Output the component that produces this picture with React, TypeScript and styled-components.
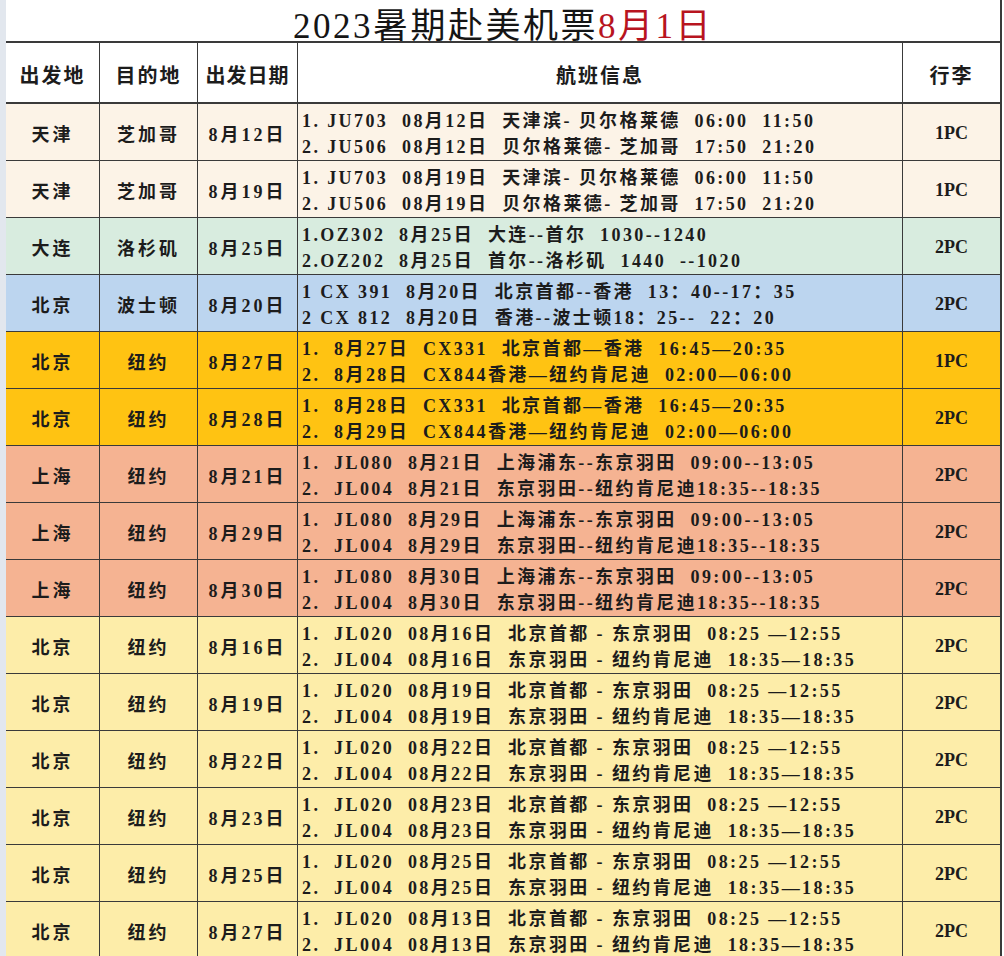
import styled, { createGlobalStyle } from 'styled-components'

type Tone = 'cream' | 'green' | 'blue' | 'gold' | 'salmon' | 'yellow'

type Flight = {
	from: string
	to: string
	date: string
	lines: [string, string]
	bag: string
	tone: Tone
}

const tones: Record<Tone, string> = {
	cream: '#fcf3e7',
	green: '#d8ecdf',
	blue: '#bcd5ef',
	gold: '#ffc312',
	salmon: '#f5b392',
	yellow: '#fdeda9',
}

const jl = (d: string): [string, string] => [
	`1.  JL020  08月${d}日  北京首都 - 东京羽田  08:25 —12:55`,
	`2.  JL004  08月${d}日  东京羽田 - 纽约肯尼迪  18:35—18:35`,
]

const sh = (d: string): [string, string] => [
	`1.  JL080  8月${d}日  上海浦东--东京羽田  09:00--13:05`,
	`2.  JL004  8月${d}日  东京羽田--纽约肯尼迪18:35--18:35`,
]

const cx = (a: string, b: string): [string, string] => [
	`1.  8月${a}日  CX331  北京首都—香港  16:45—20:35`,
	`2.  8月${b}日  CX844香港—纽约肯尼迪  02:00—06:00`,
]

const flights: Flight[] = [
	{
		from: '天津', to: '芝加哥', date: '8月12日', bag: '1PC', tone: 'cream',
		lines: ['1. JU703  08月12日  天津滨- 贝尔格莱德  06:00  11:50', '2. JU506  08月12日  贝尔格莱德- 芝加哥  17:50  21:20'],
	},
	{
		from: '天津', to: '芝加哥', date: '8月19日', bag: '1PC', tone: 'cream',
		lines: ['1. JU703  08月19日  天津滨- 贝尔格莱德  06:00  11:50', '2. JU506  08月19日  贝尔格莱德- 芝加哥  17:50  21:20'],
	},
	{
		from: '大连', to: '洛杉矶', date: '8月25日', bag: '2PC', tone: 'green',
		lines: ['1.OZ302  8月25日  大连--首尔  1030--1240', '2.OZ202  8月25日  首尔--洛杉矶  1440  --1020'],
	},
	{
		from: '北京', to: '波士顿', date: '8月20日', bag: '2PC', tone: 'blue',
		lines: ['1 CX 391  8月20日  北京首都--香港  13：40--17：35', '2 CX 812  8月20日  香港--波士顿18：25--  22：20'],
	},
	{ from: '北京', to: '纽约', date: '8月27日', bag: '1PC', tone: 'gold', lines: cx('27', '28') },
	{ from: '北京', to: '纽约', date: '8月28日', bag: '2PC', tone: 'gold', lines: cx('28', '29') },
	{ from: '上海', to: '纽约', date: '8月21日', bag: '2PC', tone: 'salmon', lines: sh('21') },
	{ from: '上海', to: '纽约', date: '8月29日', bag: '2PC', tone: 'salmon', lines: sh('29') },
	{ from: '上海', to: '纽约', date: '8月30日', bag: '2PC', tone: 'salmon', lines: sh('30') },
	{ from: '北京', to: '纽约', date: '8月16日', bag: '2PC', tone: 'yellow', lines: jl('16') },
	{ from: '北京', to: '纽约', date: '8月19日', bag: '2PC', tone: 'yellow', lines: jl('19') },
	{ from: '北京', to: '纽约', date: '8月22日', bag: '2PC', tone: 'yellow', lines: jl('22') },
	{ from: '北京', to: '纽约', date: '8月23日', bag: '2PC', tone: 'yellow', lines: jl('23') },
	{ from: '北京', to: '纽约', date: '8月25日', bag: '2PC', tone: 'yellow', lines: jl('25') },
	{ from: '北京', to: '纽约', date: '8月27日', bag: '2PC', tone: 'yellow', lines: jl('13') },
]

export default function App() {
	return (
		<>
			<GlobalStyle />
			<Page>
				<Table>
					<Title>
						2023暑期赴美机票<Red>8月1日</Red>
					</Title>

					<HeadCell>出发地</HeadCell>
					<HeadCell>目的地</HeadCell>
					<HeadCell $tight>出发日期</HeadCell>
					<HeadCell>航班信息</HeadCell>
					<HeadCell $last>行李</HeadCell>

					{flights.map((f, i) => (
						<Row key={i}>
							<Cell $bg={tones[f.tone]}>{f.from}</Cell>
							<Cell $bg={tones[f.tone]}>{f.to}</Cell>
							<Cell $bg={tones[f.tone]}>{f.date}</Cell>
							<InfoCell $bg={tones[f.tone]}>
								<div>{f.lines[0]}</div>
								<div>{f.lines[1]}</div>
							</InfoCell>
							<BagCell $bg={tones[f.tone]}>{f.bag}</BagCell>
						</Row>
					))}
				</Table>
			</Page>
		</>
	)
}

const GlobalStyle = createGlobalStyle`
	html, body {
		margin: 0;
		padding: 0;
		background: #ffffff;
	}

	body {
		font-family: "Liberation Serif", "Noto Sans CJK SC", serif;
		color: #1c1c1c;
	}
`

const Page = styled.div`
	width: 1004px;
	height: 956px;
	overflow: hidden;
	box-sizing: border-box;
	border-left: 6px solid #e2e7ee;
`

const Table = styled.div`
	display: grid;
	grid-template-columns: 94px 98px 100px 605px 97px;
	grid-auto-rows: 57px;
	grid-template-rows: 43px 61px;
	width: 996px;
	border-right: 2px solid #3a3a3a;
	box-sizing: border-box;
`

const Title = styled.div`
	grid-column: 1 / -1;
	display: flex;
	align-items: center;
	justify-content: center;
	font-size: 35px;
	letter-spacing: 2.5px;
	color: #151515;
	border-bottom: 2px solid #3a3a3a;
	box-sizing: border-box;
	padding-top: 3px;
`

const Red = styled.span`
	color: #b8141f;
`

const HeadCell = styled.div<{ $tight?: boolean; $last?: boolean }>`
	display: flex;
	align-items: center;
	justify-content: center;
	padding-top: 3px;
	font-family: "Noto Sans CJK SC", sans-serif;
	font-weight: 700;
	font-size: 20px;
	letter-spacing: ${(p) => (p.$tight ? '1px' : '2px')};
	border-right: ${(p) => (p.$last ? 'none' : '1.5px solid #3a3a3a')};
	border-bottom: 2px solid #3a3a3a;
	background: #ffffff;
	box-sizing: border-box;
`

const Row = styled.div`
	display: contents;
`

const Cell = styled.div<{ $bg: string }>`
	display: flex;
	align-items: center;
	justify-content: center;
	padding-top: 2px;
	background: ${(p) => p.$bg};
	font-weight: 700;
	font-size: 18px;
	letter-spacing: 3px;
	border-right: 1.5px solid #3a3a3a;
	border-bottom: 1.5px solid #3a3a3a;
	box-sizing: border-box;
	white-space: nowrap;
`

const InfoCell = styled(Cell)`
	flex-direction: column;
	align-items: flex-start;
	justify-content: center;
	padding-left: 4px;
	padding-top: 3px;
	letter-spacing: 2.4px;
	line-height: 26px;
	white-space: pre;
`

const BagCell = styled(Cell)`
	letter-spacing: 0;
	font-weight: 700;
	border-right: none;
`
